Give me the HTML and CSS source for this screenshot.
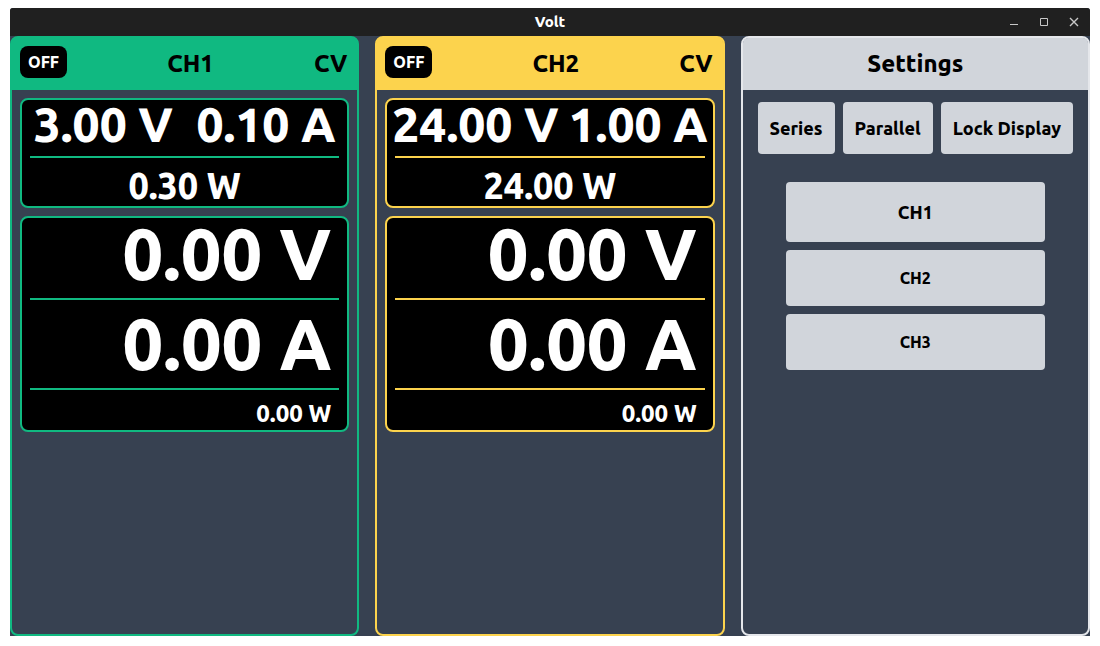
FILE: index.html
```html
<!DOCTYPE html>
<html lang="en">
<head>
<meta charset="utf-8">
<title>Volt</title>
<meta name="viewport" content="width=device-width, initial-scale=1">
<link rel="stylesheet" href="styles.css">
</head>
<body>
<div class="window">
  <header class="titlebar">
    <h1 class="titlebar-name">Volt</h1>
    <div class="titlebar-controls">
      <button class="titlebar-button" type="button" aria-label="Minimize"><svg width="10" height="10" viewBox="0 0 10 10"><path d="M1 7.5h8"/></svg></button>
      <button class="titlebar-button" type="button" aria-label="Maximize"><svg width="10" height="10" viewBox="0 0 10 10"><path d="M1.5 1.5h7v7h-7z"/></svg></button>
      <button class="titlebar-button" type="button" aria-label="Close"><svg width="10" height="10" viewBox="0 0 10 10"><path class="cross" d="M1 1l8 8M9 1l-8 8"/></svg></button>
    </div>
  </header>
  <main class="panels">
    <section class="panel panel-green">
      <div class="panel-header">
        <button class="toggle" type="button">OFF</button>
        <h2 class="panel-title">CH1</h2>
        <span class="mode">CV</span>
      </div>
      <div class="panel-body">
        <div class="display">
          <div class="setpoints"><span>3.00 V</span><span>0.10 A</span></div>
          <hr class="divider">
          <div class="set-power">0.30 W</div>
        </div>
        <div class="display">
          <div class="reading">0.00 V</div>
          <hr class="divider">
          <div class="reading">0.00 A</div>
          <hr class="divider">
          <div class="power">0.00 W</div>
        </div>
      </div>
    </section>
    <section class="panel panel-yellow">
      <div class="panel-header">
        <button class="toggle" type="button">OFF</button>
        <h2 class="panel-title">CH2</h2>
        <span class="mode">CV</span>
      </div>
      <div class="panel-body">
        <div class="display">
          <div class="setpoints"><span>24.00 V</span><span>1.00 A</span></div>
          <hr class="divider">
          <div class="set-power">24.00 W</div>
        </div>
        <div class="display">
          <div class="reading">0.00 V</div>
          <hr class="divider">
          <div class="reading">0.00 A</div>
          <hr class="divider">
          <div class="power">0.00 W</div>
        </div>
      </div>
    </section>
    <section class="panel panel-settings">
      <div class="panel-header">
        <h2 class="panel-title">Settings</h2>
      </div>
      <div class="actions">
        <button class="button" type="button">Series</button>
        <button class="button" type="button">Parallel</button>
        <button class="button" type="button">Lock Display</button>
      </div>
      <div class="channels">
        <button class="button channel channel-active" type="button">CH1</button>
        <button class="button channel" type="button">CH2</button>
        <button class="button channel" type="button">CH3</button>
      </div>
    </section>
  </main>
</div>
</body>
</html>
```

FILE: styles.css
```css
* {
  box-sizing: border-box;
}

body {
  margin: 0;
  padding: 8px 10px 10px;
  background: #fff;
  color: #000;
  font-family: Ubuntu, "Noto Sans", sans-serif;
  font-size: 16px;
  font-weight: 800;
  line-height: 24px;
}

h1,
h2 {
  margin: 0;
}

button {
  border: 0;
  font: inherit;
  color: inherit;
  cursor: pointer;
}

.window {
  display: flex;
  flex-direction: column;
  min-height: calc(100vh - 18px);
  background: #374151;
  border-radius: 3px 3px 0 0;
  overflow: hidden;
}

.titlebar {
  display: grid;
  grid-template-columns: 1fr auto 1fr;
  align-items: center;
  height: 28px;
  padding: 0 6px;
  background: #202020;
}

.titlebar-name {
  grid-column: 2;
  color: #fff;
  font-size: 15px;
  font-weight: inherit;
  line-height: 28px;
}

.titlebar-controls {
  display: flex;
  justify-content: flex-end;
  gap: 10px;
}

.titlebar-button {
  display: grid;
  place-items: center;
  width: 20px;
  height: 20px;
  padding: 0;
  background: none;
}

.titlebar-button svg {
  fill: none;
  stroke: #c8c8c8;
  stroke-width: 1;
}

.titlebar-button .cross {
  stroke-width: 1.4;
}

.panels {
  flex: 1;
  display: grid;
  grid-template-columns: repeat(3, minmax(0, 1fr));
  gap: 16px;
}

.panel {
  --accent: #10b981;
  --header: var(--accent);
  border: 2px solid var(--accent);
  border-radius: 8px;
}

.panel-yellow {
  --accent: #fcd34d;
}

.panel-settings {
  --accent: #e5e7eb;
  --header: #d1d5db;
}

.panel-header {
  display: flex;
  justify-content: space-between;
  align-items: center;
  padding: 8px;
  background: var(--header);
  border-radius: 5px 5px 0 0;
  font-size: 24px;
  line-height: 36px;
}

.panel-green,
.panel-yellow {
  background: linear-gradient(var(--accent), var(--accent)) top / 100% 16px no-repeat;
}

.panel-settings .panel-header {
  justify-content: center;
}

.panel-title {
  font-size: inherit;
  font-weight: inherit;
}

.mode {
  padding-right: 2px;
}

.toggle {
  align-self: flex-start;
  padding: 4px 8px;
  background: #000;
  border-radius: 8px;
  color: #fff;
  font-size: 16px;
  line-height: 24px;
}

.panel-body {
  display: grid;
  gap: 8px;
  padding: 8px;
}

.display {
  padding: 0 8px;
  background: #000;
  border: 2px solid var(--accent);
  border-radius: 8px;
  color: #fff;
}

.divider {
  height: 2px;
  margin: 8px 0;
  background: var(--accent);
  border: 0;
}

.setpoints {
  display: flex;
  justify-content: space-around;
  margin: 0 -8px;
  font-size: 48px;
  line-height: 48px;
  white-space: nowrap;
}

.set-power {
  font-size: 36px;
  line-height: 40px;
  text-align: center;
}

.reading {
  padding-right: 8px;
  font-size: 72px;
  line-height: 72px;
  text-align: right;
}

.power {
  padding-right: 8px;
  font-size: 24px;
  line-height: 32px;
  text-align: right;
}

.button {
  padding: 12px;
  background: #d1d5db;
  border-radius: 4px;
  font-size: 18px;
  line-height: 28px;
  white-space: nowrap;
}

.actions {
  display: flex;
  justify-content: center;
  gap: 8px;
  padding: 12px 8px;
}

.channels {
  display: grid;
  gap: 8px;
  width: 75%;
  margin: 16px auto;
}

.channel {
  padding: 16px;
  font-size: 16px;
  line-height: 24px;
}

.channel-active {
  font-size: 18px;
  line-height: 28px;
}
```
